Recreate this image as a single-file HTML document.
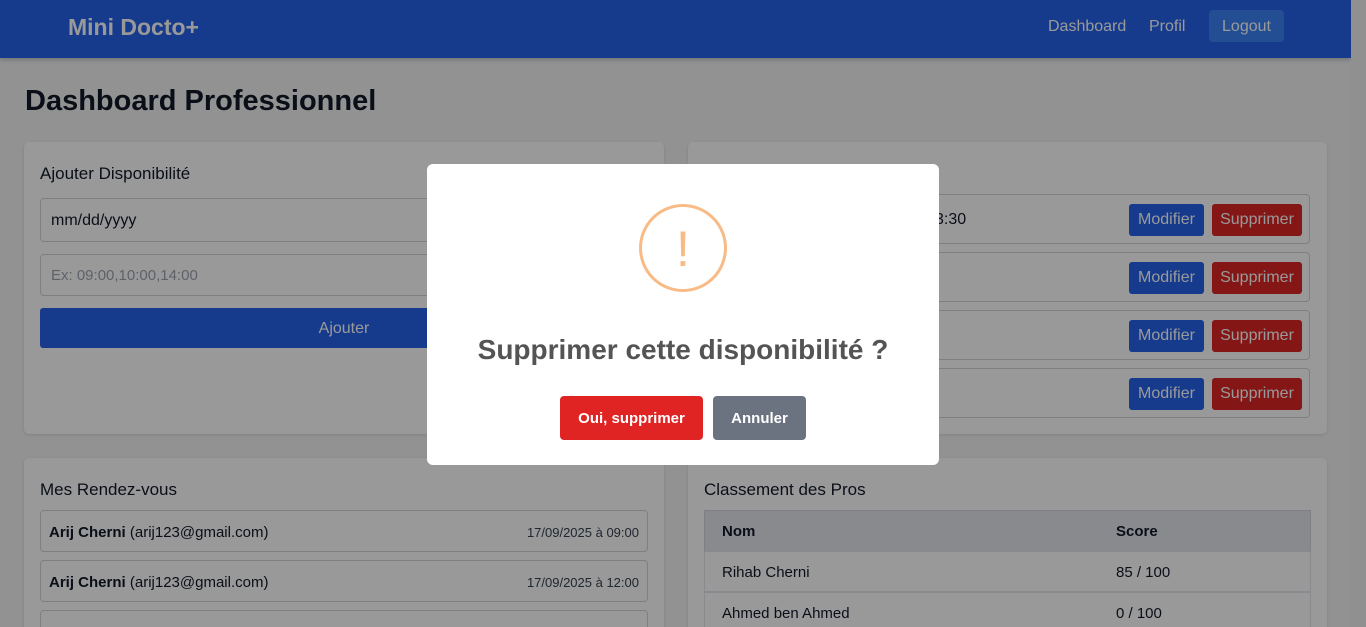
<!DOCTYPE html>
<html><head><meta charset="utf-8"><style>
*{box-sizing:border-box;margin:0;padding:0}
html,body{width:1366px;height:627px;overflow:hidden}
body{background:#f3f4f6;font-family:"Liberation Sans",sans-serif;color:#111827;position:relative}
.nav{position:absolute;left:0;top:0;width:1351px;height:58px;background:#2563eb;box-shadow:0 2px 4px rgba(0,0,0,.2)}
.brand{position:absolute;left:68px;top:14px;font-size:23px;font-weight:bold;color:#fff}
.nl{position:absolute;top:18px;font-size:16px;color:#fff}
.logout{position:absolute;left:1209px;top:10px;width:75px;height:32px;background:#3b82f6;border-radius:4px;color:#fff;font-size:16px;text-align:center;line-height:33px}
.sb{position:absolute;left:1351px;top:0;width:15px;height:627px;background:#f0f0f0}
h1{position:absolute;left:25px;top:85px;font-size:29px;font-weight:bold;color:#111827}
.card{position:absolute;background:#fff;border-radius:5px;box-shadow:0 1px 3px rgba(0,0,0,.12)}
.ct{position:absolute;font-size:17px;color:#111827}
.inp{position:absolute;border:1px solid #d1d5db;border-radius:4px;font-size:16px;padding-left:10px}
.row{position:absolute;left:16px;width:606px;border:1px solid #d1d5db;border-radius:4px;height:50px}
.bm,.bs{position:absolute;top:9px;height:32px;border-radius:3px;color:#fff;font-size:16px;line-height:32px;text-align:center}
.bm{left:424px;width:75px;background:#2563eb}.bs{left:507px;width:90px;background:#dc2626}
.rv{position:absolute;left:16px;width:608px;height:42px;border:1px solid #d1d5db;border-radius:4px;font-size:15px}
.ov{position:absolute;left:0;top:0;width:1366px;height:627px;background:rgba(0,0,0,.4)}
.modal{position:absolute;left:427px;top:164px;width:512px;height:301px;background:#fff;border-radius:6px}
</style></head><body>
<div class="nav"><div class="brand">Mini Docto+</div>
<div class="nl" style="left:1048px">Dashboard</div><div class="nl" style="left:1149px">Profil</div>
<div class="logout">Logout</div></div>
<div class="sb"></div>
<h1>Dashboard Professionnel</h1>
<div class="card" style="left:24px;top:142px;width:640px;height:292px">
<div class="ct" style="left:16px;top:22px">Ajouter Disponibilité</div>
<div class="inp" style="left:16px;top:56px;width:608px;height:44px;line-height:44px">mm/dd/yyyy</div>
<div class="inp" style="left:16px;top:112px;width:608px;height:42px;line-height:42px;color:#9ca3af;font-size:15px">Ex: 09:00,10:00,14:00</div>
<div style="position:absolute;left:16px;top:166px;width:608px;height:40px;background:#2563eb;border-radius:3px;color:#fff;text-align:center;line-height:42px;font-size:16px">Ajouter</div>
</div>
<div class="card" style="left:688px;top:142px;width:639px;height:292px">
<div class="row" style="top:52px"><span style="position:absolute;left:230px;top:16px;font-size:16px">3:30</span><div class="bm">Modifier</div><div class="bs">Supprimer</div></div>
<div class="row" style="top:110px"><div class="bm">Modifier</div><div class="bs">Supprimer</div></div>
<div class="row" style="top:168px"><div class="bm">Modifier</div><div class="bs">Supprimer</div></div>
<div class="row" style="top:226px"><div class="bm">Modifier</div><div class="bs">Supprimer</div></div>
</div>
<div class="card" style="left:24px;top:458px;width:640px;height:200px">
<div class="ct" style="left:16px;top:22px">Mes Rendez-vous</div>
<div class="rv" style="top:52px"><span style="position:absolute;left:8px;top:13px"><b>Arij Cherni</b> (arij123@gmail.com)</span><span style="position:absolute;right:8px;top:14px;font-size:13px;color:#374151">17/09/2025 à 09:00</span></div>
<div class="rv" style="top:102px"><span style="position:absolute;left:8px;top:13px"><b>Arij Cherni</b> (arij123@gmail.com)</span><span style="position:absolute;right:8px;top:14px;font-size:13px;color:#374151">17/09/2025 à 12:00</span></div>
<div class="rv" style="top:152px"></div>
</div>
<div class="card" style="left:688px;top:458px;width:639px;height:200px">
<div class="ct" style="left:16px;top:22px">Classement des Pros</div>
<div style="position:absolute;left:16px;top:52px;width:607px;height:42px;background:#e5e7eb;border:1px solid #d1d5db;font-size:15px;font-weight:bold"><span style="position:absolute;left:17px;top:12px">Nom</span><span style="position:absolute;left:411px;top:12px">Score</span></div>
<div style="position:absolute;left:16px;top:93px;width:607px;height:41px;border:1px solid #e5e7eb;font-size:15px"><span style="position:absolute;left:17px;top:12px">Rihab Cherni</span><span style="position:absolute;left:411px;top:12px">85 / 100</span></div>
<div style="position:absolute;left:16px;top:134px;width:607px;height:41px;border:1px solid #e5e7eb;font-size:15px"><span style="position:absolute;left:17px;top:12px">Ahmed ben Ahmed</span><span style="position:absolute;left:411px;top:12px">0 / 100</span></div>
</div>
<div class="ov"></div>
<div class="modal">
<div style="position:absolute;left:212px;top:40px;width:88px;height:88px;border:3px solid #f8bb86;border-radius:50%;color:#f8bb86;font-size:50px;text-align:center;line-height:84px">!</div>
<div style="position:absolute;left:0;width:512px;top:170px;text-align:center;font-size:28px;font-weight:bold;color:#545454">Supprimer cette disponibilité ?</div>
<div style="position:absolute;left:133px;top:232px;width:143px;height:44px;background:#e02424;border-radius:4px;color:#fff;font-weight:bold;font-size:15px;text-align:center;line-height:46px">Oui, supprimer</div>
<div style="position:absolute;left:286px;top:232px;width:93px;height:44px;background:#6b7280;border-radius:4px;color:#fff;font-weight:bold;font-size:15px;text-align:center;line-height:46px">Annuler</div>
</div>
</body></html>
